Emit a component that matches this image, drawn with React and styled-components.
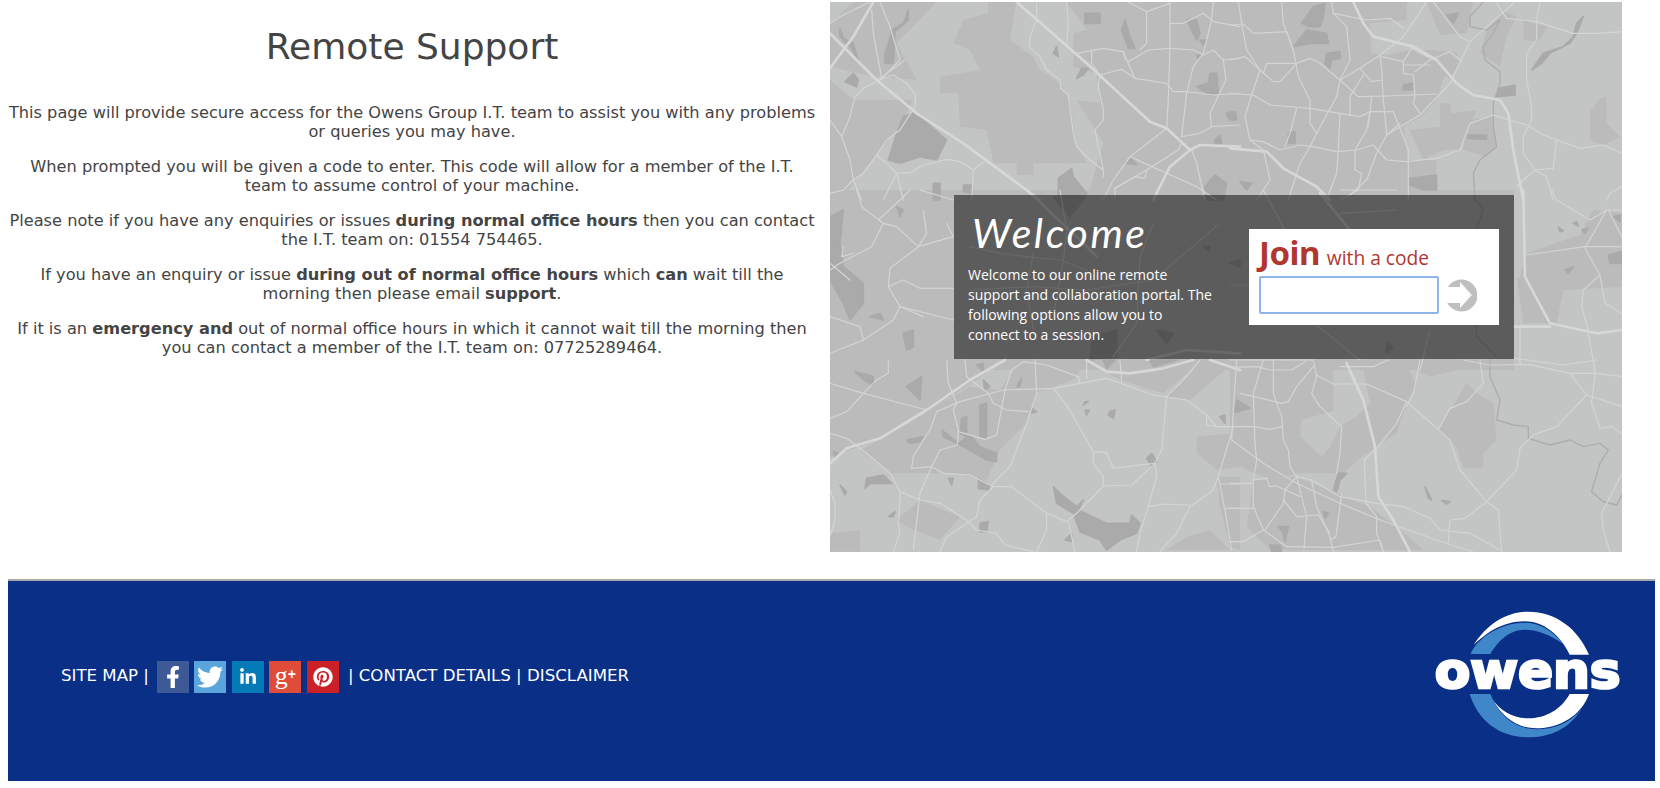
import React from "react";
import styled, { createGlobalStyle } from "styled-components";
import { FaFacebookF, FaTwitter, FaLinkedinIn, FaPinterest } from "react-icons/fa";

const GlobalStyle = createGlobalStyle`
  html, body {
    margin: 0;
    padding: 0;
    background: #fff;
  }
`;

const Page = styled.div`
  width: 1660px;
  font-family: "DejaVu Sans", Verdana, sans-serif;
  color: #444;
`;

const Main = styled.main`
  display: grid;
  grid-template-columns: 824px 792px;
  column-gap: 6px;
  padding-top: 2px;
`;

const Intro = styled.section`
  padding: 0 7px;
  text-align: center;
`;

const Title = styled.h1`
  margin: 23px 0 35px;
  font-size: 36px;
  font-weight: 400;
  line-height: 43px;
`;

const Para = styled.p`
  margin: 0 0 16px;
  font-size: 16.2px;
  line-height: 19px;
`;

const MapPanel = styled.section`
  position: relative;
  height: 550px;
  background: #c3c5c4;
`;

const MapDrawing = styled.svg`
  display: block;
  width: 792px;
  height: 550px;
`;

const Overlay = styled.div`
  position: absolute;
  left: 124px;
  top: 193px;
  box-sizing: border-box;
  width: 560px;
  height: 164px;
  padding: 0 15px 0 14px;
  display: flex;
  align-items: center;
  justify-content: space-between;
  background: rgba(0, 0, 0, 0.51);
  color: #fff;
`;

const WelcomeCol = styled.div`
  width: 247px;
`;

const WelcomeTitle = styled.h2`
  margin: 0 0 8px 4px;
  font-family: "Lato", sans-serif;
  font-style: italic;
  font-weight: 400;
  font-size: 41px;
  line-height: 48px;
  letter-spacing: 2.6px;
`;

const WelcomeText = styled.p`
  margin: 0;
  font-family: "Open Sans", sans-serif;
  font-size: 14px;
  line-height: 20px;
`;

const JoinBox = styled.div`
  box-sizing: border-box;
  width: 250px;
  height: 96px;
  padding: 2px 10px 0;
  background: #fff;
  color: #b0372f;
  font-family: "Open Sans", sans-serif;
`;

const JoinHeading = styled.div`
  font-size: 19.2px;
  line-height: 43px;
  height: 45px;
  white-space: nowrap;

  & b {
    font-size: 33px;
    font-family: "Noto Sans", sans-serif;
    letter-spacing: -0.5px;
    margin-right: 2px;
  }
`;

const JoinRow = styled.div`
  display: flex;
  align-items: center;
  gap: 8px;
`;

const CodeInput = styled.input`
  box-sizing: border-box;
  width: 180px;
  height: 38px;
  border: 2px solid #8fb4ec;
  border-radius: 2px;
  background: #fff;
  outline: none;
`;

const Footer = styled.footer`
  box-sizing: border-box;
  width: 1647px;
  height: 202px;
  margin: 27px 0 0 8px;
  padding: 0 26px 0 53px;
  display: flex;
  align-items: center;
  justify-content: space-between;
  background: #0a2f87;
  border-top: 2px solid #a8a8a8;
  color: #fff;
`;

const FooterLinks = styled.nav`
  display: flex;
  align-items: center;
  margin-bottom: 8px;
  font-size: 16.6px;
  white-space: nowrap;
`;

const FooterText = styled.span`
  margin-bottom: 4px;
`;

const Socials = styled.div`
  display: flex;
  gap: 5.5px;
  margin: 0 9px 0 8px;
`;

const Social = styled.a`
  width: 32px;
  height: 32px;
  display: flex;
  align-items: center;
  justify-content: center;
  background: ${(props) => props.$bg};
  color: #fff;
  font-size: ${(props) => props.$size}px;
`;

const GPlus = styled.span`
  font-family: "Liberation Serif", serif;
  font-size: 26px;
  line-height: 28px;
  letter-spacing: 0;
  margin-top: -4px;

  & small {
    font-family: "Liberation Sans", sans-serif;
    font-size: 14px;
    font-weight: 700;
    vertical-align: 5px;
  }
`;

const Logo = styled.svg`
  display: block;
  width: 196px;
  height: 132px;
  margin-bottom: 12px;
`;

const mapLayers = [
  {
    at: [820, 0],
    mid: [
      "415,280 360,280 360,230 480,210 450,150 400,130 430,60 505,40 505,6 590,6 570,120 640,170 660,210 720,250 750,300 770,440 800,490 640,490 640,525 590,525 590,490 520,490 500,390 420,380",
      "230,130 350,6 170,6 100,6 30,70 30,200 160,230 290,240",
      "30,240 100,300 280,300 230,390 60,600 30,600",
      "740,6 1260,6 1260,600 800,600 850,430 770,300 840,310 830,220 760,200 760,100 800,90",
    ],
    dark: [
      "265,30 250,70 215,90 205,130 195,160 195,190 220,190 225,95 265,60",
      "60,85 70,115 100,130 115,185 95,145 60,110",
      "100,220 75,245 110,260 115,240",
      "250,350 230,400 205,480 240,490 300,470 350,480 380,420 310,360 280,340",
      "795,40 840,40 840,70 795,70",
      "915,60 930,110 945,145 925,145 905,90",
      "770,235 785,205 805,205 790,225",
      "1170,220 1190,220 1195,280 1170,285 1130,260 1165,250",
      "1220,340 1245,335 1250,360 1225,355",
      "1185,420 1200,405 1205,430 1185,435",
      "1185,525 1220,550 1210,600 1160,600 1155,560",
      "715,535 755,505 760,530 800,580 790,600 715,600",
      "920,490 950,495 935,475",
      "700,160 715,170 710,140",
      "1130,165 1145,165 1135,180",
      "340,550 360,550 360,600 340,600",
      "430,555 455,555 455,580 430,575",
      "1100,60 1130,60 1140,100 1130,120",
      "1140,120 1160,120 1150,135",
    ],
    roads: [
      "30,70 60,50 100,30 150,6",
      "180,6 210,80 240,180 180,240 130,265 105,290 90,350 65,410 30,360",
      "65,410 90,480 100,540 125,600",
      "255,180 175,240",
      "155,30 160,100 185,235",
      "175,240 220,225 260,250 287,285 285,320 240,390 200,420 170,465 130,520 100,540 70,570 30,580",
      "170,465 200,490 230,520 270,518 310,495 380,478 420,485 460,510 500,478",
      "230,520 250,600",
      "460,510 455,600",
      "230,520 190,600",
      "650,6 650,60 630,110 628,140 660,170 680,210 720,240 722,265 745,285 760,400 770,440 810,480 850,510 850,530",
      "740,6 745,60 740,140",
      "770,160 850,145 910,155 920,180 945,235 1040,250 1060,275 1100,275 1180,285 1260,280",
      "815,150 815,190 840,225 905,208 945,235",
      "840,225 835,260 850,330 850,360 825,390 835,440 850,510",
      "910,155 915,175 925,185 985,150 1050,145 1120,150 1150,165 1180,150 1210,180 1260,175",
      "1050,6 1050,145 1045,300 1040,385",
      "925,6 980,35 1050,10",
      "980,35 980,130 960,150",
      "1180,6 1175,60 1150,160 1120,200 1100,280 1085,410",
      "1050,70 1090,70 1150,40 1175,60 1180,65 1260,80",
      "1210,180 1218,240 1170,340 1175,380 1260,375",
      "1040,385 930,470 880,540 850,600",
      "930,470 1040,520 1130,560 1190,600",
      "1085,430 1115,450 1130,490 1155,600",
      "1085,410 1140,400 1175,380",
      "1085,430 1075,450 980,510 885,565 885,600",
      "980,510 975,535 945,530 885,565",
    ],
    majors: [
      "30,100 170,240 290,340 430,430 660,600",
      "160,6 100,110 30,205",
      "590,6 800,190 990,365 1040,385 1110,450",
      "1260,440 1140,435 1110,450 1050,500 1000,600",
    ],
  },
  {
    at: [1230, 0],
    mid: [
      "0,6 530,6 530,60 420,70 425,160 470,165 540,150 600,150 660,180 620,300 575,350 520,380 535,480 620,480 620,600 0,600",
      "590,6 730,6 710,100 630,105",
      "820,30 860,50 830,110 810,200 750,160 770,90",
      "880,60 955,80 925,125 880,120",
      "1080,335 1110,295 1130,290 1130,370 1170,410 1120,435 1080,420",
      "590,150 680,155 690,190 660,235 590,205",
      "540,390 630,380 630,310 660,310 665,340 740,330 700,420 690,450 640,450 580,480",
      "710,360 790,350 800,440 770,470 700,450",
    ],
    dark: [
      "250,20 285,10 280,50 270,80 240,80 215,70",
      "190,140 230,90 290,100 295,130 240,130",
      "290,160 330,155 330,175 305,180 300,205 285,190",
      "0,335 20,345 15,360 0,360",
      "175,400 195,395 195,430 175,430",
      "520,255 548,250 548,270 520,270",
      "715,405 770,405 770,418 715,415",
      "540,535 620,525 620,570 580,570 540,555",
      "30,545 65,550 50,570",
      "805,265 855,255 855,285 800,290",
      "905,210 940,160 1000,140 1030,110 1040,70 1060,50 1040,100 1020,130 960,160 935,190",
      "650,45 685,40 670,70",
    ],
    rivers: [
      "760,6 720,50 720,80 770,90 810,60",
      "810,60 790,100 760,140 765,180 810,215 810,250 790,310 790,380 800,440 750,480 730,520 735,600",
    ],
    roads: [
      "25,6 40,100 50,150 90,210 60,300 45,350 60,420 100,450 120,540 80,600",
      "0,75 40,72 70,100 170,95 190,150 205,230 240,300 240,370 260,400 320,290 330,240 270,190 240,175 200,190 150,245 130,245 90,210",
      "155,6 160,70 190,150",
      "0,180 45,170 90,210",
      "0,280 70,285 120,315 240,325 330,340 390,350 420,335 490,335 500,360 520,410 535,450 535,600",
      "305,6 310,40 350,80 360,180 330,240 390,205 450,165 520,110 590,6",
      "310,40 410,60 480,55 520,85",
      "200,190 110,190 100,220",
      "200,325 180,400 165,440",
      "330,340 325,450 320,520 290,600",
      "260,400 240,440 210,490 175,600",
      "60,420 100,425 150,450 210,435 250,440 320,455 380,450 430,435 470,480 530,485 620,475 690,450 720,370 790,345 890,375 940,405 1050,445 1120,435 1176,460",
      "420,335 410,390 375,450 375,510 395,520 385,570 330,600",
      "510,370 470,405 440,460 410,540 360,585",
      "450,165 455,210 460,300 470,400",
      "425,290 415,380",
      "330,240 385,290 470,288 620,282",
      "400,225 360,290 360,345",
      "390,205 425,245 455,240",
      "455,170 520,185 520,220 550,225 555,290 550,310 570,340",
      "520,185 545,145 600,175",
      "520,195 600,195",
      "555,215 600,180 660,155 690,180",
      "610,6 690,110 720,125 855,6",
      "720,125 660,250 570,345 470,405",
      "800,10 830,55 920,65 1030,100 1100,100 1176,95",
      "930,6 920,60 920,120 890,160 890,240 905,320 905,360 880,410 880,460 915,510 970,505 980,420",
      "915,510 880,540 860,560",
      "915,510 950,530 970,600",
      "1176,560 1140,580 1130,600",
    ],
    majors: [
      "370,6 400,70 430,110 550,140 620,180 680,250 730,285 810,300 835,340 850,450 880,600",
      "0,445 110,455 160,505 260,560 300,600",
    ],
  },
  {
    at: [820, 190],
    mid: [
      "30,0 400,0 400,540 30,540",
      "400,0 1260,0 1260,540 400,540",
    ],
    dark: [
      "30,80 70,60 60,160 70,230 130,280 130,340 90,390 70,340 30,270",
      "230,50 250,60 240,80",
      "250,430 280,420 280,470 260,480",
      "150,380 180,370 190,390",
      "700,20 790,30 750,80",
      "820,440 890,420 890,500 810,510",
      "1010,420 1060,430 1040,460",
      "1150,170 1170,170 1165,180",
    ],
    roads: [
      "110,0 125,50 150,70 190,100 230,110 295,170 400,140",
      "190,100 155,170 60,220 30,240",
      "295,170 210,235 205,290 240,350 310,380",
      "30,220 90,270",
      "205,290 250,270 300,295 400,295",
      "240,350 220,390 130,450 30,490",
      "240,350 400,390",
      "30,380 120,410 130,450",
      "70,170 65,200 100,190",
      "270,0 240,30 175,90",
      "310,60 320,130 295,170",
      "380,100 400,140",
      "300,0 400,30",
      "450,170 540,190 620,200 720,210 800,240",
      "720,0 740,120 730,210 700,380",
      "640,190 620,300 640,420",
      "450,300 640,290 800,300 1000,270 1200,100",
      "1000,100 960,200 950,400 880,500",
    ],
    majors: ["620,0 780,150 830,200", "1260,490 1100,480 980,510"],
  },
  {
    at: [1230, 190],
    mid: [
      "0,0 852,0 852,540 0,540",
      "890,190 1030,140 1176,130 1176,290 1020,300 950,300 870,260",
      "1090,60 1176,70 1176,130 1030,170",
      "860,260 1000,300 980,400 880,400",
    ],
    dark: [
      "985,112 1000,122 990,125",
      "1030,100 1040,95 1045,108",
      "1055,120 1075,115 1065,130",
      "1005,240 1030,230 1015,250",
      "1150,80 1170,75 1170,95",
      "1135,195 1176,185 1176,220 1140,220",
      "470,460 490,470 470,490",
      "0,220 30,210 30,230",
    ],
    rivers: ["730,20 760,60 730,140 740,440 800,500"],
    roads: [
      "1176,60 1130,60 1065,175 1110,255 1125,340 1176,370",
      "965,0 980,30 1080,90 1130,60",
      "890,195 1065,170 1176,170",
      "1110,255 1060,300 1055,350 1075,420",
      "1075,430 1095,540",
      "852,505 1000,525 1100,510",
      "1176,140 1135,60",
      "870,410 870,525",
      "100,0 170,130",
      "0,285 80,285",
      "330,0 500,0",
      "330,70 500,60",
      "240,390 390,510",
      "600,420 570,540",
      "0,510 250,510",
    ],
    majors: [
      "880,0 885,260 960,400 1100,430 1176,420",
      "852,410 960,410",
      "270,10 360,120",
    ],
  },
  {
    at: [820, 360],
    mid: [
      "30,0 550,0 470,60 330,150 150,250 60,280 30,290",
      "330,150 450,80 650,100 620,190 540,270 500,360 400,340 210,340 120,270 160,250",
      "600,0 800,0 760,60 640,100 540,90",
      "900,60 1030,100 1150,0 800,0",
      "1040,110 1110,120 1250,0 1150,0",
      "1130,230 1230,220 1260,210 1260,320 1190,330 1130,280",
      "1040,570 1100,530 1170,510 1230,570",
      "230,480 300,420 420,470 360,540 260,500",
      "30,520 120,510 120,575 30,575",
      "1190,350 1260,350 1260,570 1230,560 1200,440",
    ],
    dark: [
      "105,35 160,50 160,75 130,60",
      "260,80 305,50 300,120 280,100",
      "470,15 490,10 490,35",
      "490,60 510,80 495,90",
      "590,80 605,55 600,80",
      "635,145 650,155 635,160",
      "480,135 500,130 500,235 480,230",
      "425,175 440,170 440,230 420,220",
      "365,210 415,250 450,225 480,260 530,280 530,305 500,300 440,265 410,250 370,230",
      "260,240 310,230 300,245 270,250",
      "40,275 55,280 45,290",
      "140,355 190,345 215,370 150,370 135,385",
      "60,375 80,395 75,405",
      "475,355 510,375 505,390 475,385",
      "385,355 400,355 395,375",
      "205,470 225,455 220,470",
      "480,490 505,485 500,515 480,515",
      "700,380 720,400 770,440 790,420 775,450 860,490 930,490 935,465 960,490 950,520 900,540 860,570 840,540 780,515 760,460 710,430",
      "735,540 755,520 755,545",
      "980,295 995,280 1010,305 995,320",
      "1200,170 1215,165 1215,190",
      "795,125 805,125 790,135",
      "795,150 808,150 800,165",
      "870,155 885,150 880,175 865,165",
      "1250,130 1260,130 1260,155 1245,155",
      "850,0 885,0 860,25",
      "990,0 1070,0 1000,20",
    ],
    roads: [
      "30,70 130,100 320,150",
      "30,175 80,155 130,100 170,60 205,40 205,0",
      "380,0 385,70 410,130 400,150 415,210 412,255 360,270 335,320 300,400 280,570",
      "435,0 440,50 505,100 520,130 560,150 625,155",
      "415,215 495,238 530,225 555,90",
      "555,90 575,30 610,5 680,15 775,50 780,70 700,85 550,90 420,125 350,155 330,210 310,240 280,290 275,325",
      "645,0 650,100 620,190 570,320 515,375",
      "30,220 80,235 140,280 210,340 240,395 240,430 235,490 240,520 220,575",
      "275,325 335,320 370,340 450,345 520,380 575,380 680,460 740,485 770,460 850,378 935,375 1005,310 1010,350 985,440 960,520 950,575",
      "520,380 480,420 470,470 380,530 360,575",
      "240,395 300,420 360,430 440,480 470,510 530,520 555,555 640,575",
      "680,460 680,510 650,575",
      "745,485 765,575",
      "700,85 740,135 820,275 860,278 880,325 960,315 1005,310",
      "820,275 820,310 850,350 850,378",
      "780,70 860,55 1000,105 1100,120 1160,165 1190,200 1240,200",
      "1160,165 1160,195 1190,200",
      "1040,110 1025,270 1005,310",
      "1240,200 1195,350 1180,390 1110,440 1070,520 1020,575",
      "985,440 1030,432 1110,435",
      "1195,350 1215,450 1235,570",
      "1200,372 1260,372",
      "1215,445 1260,445",
      "1235,545 1260,545",
      "900,0 905,65",
      "800,0 800,55",
      "1140,0 1090,60 1040,110",
      "30,390 45,430 45,480 30,530",
    ],
    majors: [
      "30,310 80,265 180,235 320,150 450,60 555,0",
      "800,0 860,35 930,40 1030,25 1120,0",
      "1170,0 1260,30",
    ],
  },
  {
    at: [1230, 360],
    mid: [
      "0,0 520,0 560,70 530,130 500,220 440,260 395,290 340,340 200,340 130,360 70,340 0,300",
      "70,360 200,350 320,400 420,440 500,500 580,570 120,570 50,500",
      "630,200 710,70 740,100 790,130 800,240 760,280 760,325 700,325 680,260 620,210",
      "500,0 700,0 680,30 600,50",
    ],
    light: ["215,180 320,150 385,165 330,200 300,260 275,290 210,230", "310,30 400,30 420,130 380,170 310,150"],
    dark: [
      "20,120 60,145 15,155",
      "325,340 350,340 330,360 320,395 310,390",
      "145,500 175,500 165,545 158,515",
      "120,555 150,555 155,575 125,575",
      "585,380 605,420 595,415",
      "635,422 660,425 650,432",
      "280,455 295,460 285,475",
    ],
    rivers: [
      "780,0 780,50 810,120 800,180 850,195 895,200 895,235 960,255 1020,240 1060,260 1110,250 1135,270 1110,310 1085,395 1120,425 1160,435 1176,405",
    ],
    roads: [
      "20,0 10,150 5,240",
      "5,240 100,310 200,370 330,430 450,480 620,540 730,576",
      "200,350 245,360 330,410 440,430 520,440 600,475 630,510 720,520 810,570",
      "30,100 135,125 155,130 175,125 200,80 250,20",
      "100,0 70,100 75,250 80,300 70,360 70,440 100,510 40,545 0,545",
      "130,0 130,100 155,170 160,240 175,270 180,320 200,350 215,410 230,470 222,565",
      "0,200 70,200 120,208 155,200",
      "0,370 65,370",
      "0,445 75,445",
      "70,360 110,355 118,380 140,378 210,410",
      "200,350 165,390 160,430 105,510",
      "245,360 260,440 300,530 310,576",
      "160,420 200,470 265,465 300,520",
      "335,400 318,530 300,540",
      "100,510 170,560 310,562 450,540 460,576",
      "250,0 260,50 245,100 270,140 335,200 330,280 320,340",
      "260,45 310,72 410,72 530,125 660,240 690,330 770,425 805,450 815,576",
      "530,125 500,190 440,265 403,300 408,430 440,470 440,520 460,576",
      "570,0 550,100 530,140",
      "625,210 660,145 710,125 760,70 750,0",
      "770,425 860,330 870,265 910,225 980,200 1070,105 1020,40 1095,40 1176,50",
      "1070,105 1176,140",
      "1090,0 1095,40 1085,130 1110,205 1145,200 1176,220",
      "770,425 705,475 660,480 655,545",
      "1176,340 1115,460 1120,510 1140,576",
      "700,0 780,15 900,14 1020,40",
      "870,0 870,14",
      "330,20 430,20 475,0",
      "0,22 80,20 120,30 185,30 225,5",
    ],
    majors: ["350,10 400,120 435,260 445,410 490,480 540,576"],
  },
];

// the map picture, each layer drawn in the 3x coordinates of its own region
const MapArt = () => (
  <MapDrawing viewBox="830 2 792 550" aria-hidden="true">
    {mapLayers.map((layer) => (
      <g key={layer.at.join()} transform={`translate(${layer.at[0]} ${layer.at[1]}) scale(0.3333)`}>
        {(layer.mid || []).map((p) => <polygon key={p} points={p} fill="#bbbbbb" />)}
      </g>
    ))}
    {mapLayers.map((layer) => (
      <g key={layer.at.join()} transform={`translate(${layer.at[0]} ${layer.at[1]}) scale(0.3333)`}>
        {(layer.light || []).map((p) => <polygon key={p} points={p} fill="#c3c5c4" />)}
        <g strokeLinejoin="round">
          {(layer.dark || []).map((p) => (
            <polygon key={p} points={p} fill="#aaaaaa" stroke="#aaaaaa" strokeWidth="5" />
          ))}
        </g>
        <g fill="none" strokeLinejoin="round" strokeLinecap="round">
          {(layer.rivers || []).map((p) => <polyline key={p} points={p} stroke="#acacac" strokeWidth="4" />)}
          {(layer.roads || []).map((p) => <polyline key={p} points={p} stroke="#d3d4d4" strokeWidth="3.6" />)}
          {(layer.majors || []).map((p) => <polyline key={p} points={p} stroke="#d6d7d7" strokeWidth="8" />)}
        </g>
      </g>
    ))}
  </MapDrawing>
);

const GoArrow = () => (
  <svg width="30" height="33" viewBox="0 0 30 33" aria-hidden="true">
    <circle cx="14.5" cy="16.5" r="16" fill="#bfbfbf" />
    <polygon points="-2,8 13,8 13,3 25,16 13,29 13,24 -2,24" fill="#fff" />
    <polygon points="13,3 25,16 13,29 24,16" fill="#e6dfd3" />
  </svg>
);

const OwensLogo = () => (
  <Logo viewBox="100 60 588 396" aria-label="owens">
    <path
      d="M222 168 C262 105 320 68 385 68 C470 68 535 120 568 197 L510 197 C480 135 430 97 375 97 C310 97 262 130 222 168 Z"
      fill="#fff"
    />
    <path
      d="M213 195 C230 150 300 101 375 101 C420 101 460 125 490 165 C450 135 410 122 375 122 C330 122 295 155 272 195 Z"
      fill="#3f87c9"
    />
    <path
      d="M278 330 C300 365 340 388 385 388 C440 388 485 360 510 315 L568 315 C545 380 480 418 410 418 C350 418 305 380 278 330 Z"
      fill="#fff"
    />
    <path
      d="M210 315 L272 315 C300 385 350 420 410 421 C460 421 510 405 545 360 C510 420 450 445 385 445 C300 445 235 395 210 315 Z"
      fill="#3f87c9"
    />
    <text
      x="105"
      y="296"
      fontFamily="DejaVu Sans"
      fontWeight="700"
      fontSize="148"
      fill="#fff"
      stroke="#fff"
      strokeWidth="8"
      textLength="558"
      lengthAdjust="spacingAndGlyphs"
    >
      owens
    </text>
  </Logo>
);

const App = () => (
  <Page>
    <GlobalStyle />
    <Main>
      <Intro>
        <Title>Remote Support</Title>
        <Para>
          This page will provide secure access for the Owens Group I.T. team to assist you with any
          problems or queries you may have.
        </Para>
        <Para>
          When prompted you will be given a code to enter. This code will allow for a member of the
          I.T. team to assume control of your machine.
        </Para>
        <Para>
          Please note if you have any enquiries or issues <b>during normal office hours</b> then you
          can contact the I.T. team on: 01554 754465.
        </Para>
        <Para>
          If you have an enquiry or issue <b>during out of normal office hours</b> which <b>can</b>{" "}
          wait till the morning then please email <b>support</b>.
        </Para>
        <Para>
          If it is an <b>emergency and</b> out of normal office hours in which it cannot wait till
          the morning then you can contact a member of the I.T. team on: 07725289464.
        </Para>
      </Intro>
      <MapPanel>
        <MapArt />
        <Overlay>
          <WelcomeCol>
            <WelcomeTitle>Welcome</WelcomeTitle>
            <WelcomeText>
              Welcome to our online remote support and collaboration portal. The following options
              allow you to connect to a session.
            </WelcomeText>
          </WelcomeCol>
          <JoinBox>
            <JoinHeading>
              <b>Join</b> with a code
            </JoinHeading>
            <JoinRow>
              <CodeInput type="text" />
              <GoArrow />
            </JoinRow>
          </JoinBox>
        </Overlay>
      </MapPanel>
    </Main>
    <Footer>
      <FooterLinks>
        <FooterText>SITE MAP |</FooterText>
        <Socials>
          <Social $bg="#3e5a96" $size={22}><FaFacebookF /></Social>
          <Social $bg="#5aa5dc" $size={26}><FaTwitter /></Social>
          <Social $bg="#0379b5" $size={18}><FaLinkedinIn /></Social>
          <Social $bg="#df4c39" $size={20}><GPlus>g<small>+</small></GPlus></Social>
          <Social $bg="#cb2027" $size={20}><FaPinterest /></Social>
        </Socials>
        <FooterText>| CONTACT DETAILS | DISCLAIMER</FooterText>
      </FooterLinks>
      <OwensLogo />
    </Footer>
  </Page>
);

export default App;
